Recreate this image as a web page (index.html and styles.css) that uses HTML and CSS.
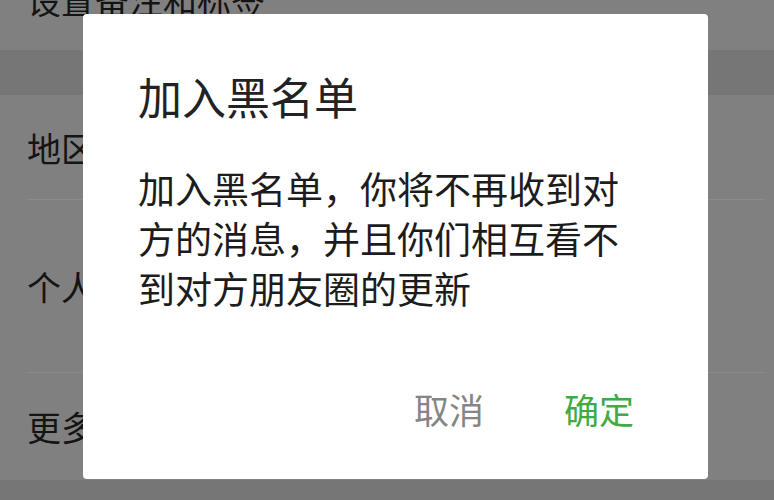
FILE: index.html
```html
<!DOCTYPE html>
<html lang="zh-CN">
<head>
<meta charset="utf-8">
<title>加入黑名单</title>
<link rel="stylesheet" href="styles.css">
</head>
<body>
<div class="page">
  <div class="list">
    <div class="row row-top"><span class="label">设置备注和标签</span></div>
    <div class="gap"></div>
    <div class="row row-region sep"><span class="label">地区</span></div>
    <div class="row row-album sep"><span class="label">个人相册</span></div>
    <div class="row row-more"><span class="label">更多信息</span></div>
    <div class="gap gap-bottom"></div>
  </div>
  <div class="dialog">
    <div class="dialog-title">加入黑名单</div>
    <div class="dialog-body">加入黑名单，你将不再收到对方的消息，并且你们相互看不到对方朋友圈的更新</div>
    <div class="dialog-actions">
      <span class="btn btn-cancel">取消</span>
      <span class="btn btn-ok">确定</span>
    </div>
  </div>
</div>
</body>
</html>
```

FILE: styles.css
```css
html, body {
  margin: 0;
  padding: 0;
}
body {
  width: 774px;
  height: 500px;
  overflow: hidden;
  background: #808080;
  font-family: "Noto Sans CJK SC", "Noto Sans", sans-serif;
}
.page {
  position: relative;
  width: 774px;
  height: 500px;
  overflow: hidden;
}
.list {
  margin-top: -50px;
  display: flex;
  flex-direction: column;
}
.row {
  display: flex;
  align-items: center;
  padding-left: 27px;
  background: #808080;
  position: relative;
}
.label {
  font-size: 34px;
  line-height: 34px;
  color: #141414;
  white-space: nowrap;
}
.row-top { height: 100px; }
.row-region { height: 105px; }
.row-album { height: 173px; }
.row-more { height: 107px; }
.sep::after {
  content: "";
  position: absolute;
  left: 27px;
  right: 9px;
  bottom: 0;
  height: 1px;
  background: #8b8b8b;
}
.gap {
  height: 45px;
  background: #767676;
}
.gap-bottom {
  height: 40px;
}
.dialog {
  position: absolute;
  left: 83px;
  top: 14px;
  width: 625px;
  height: 465px;
  box-sizing: border-box;
  background: #ffffff;
  border-radius: 4px;
  padding: 60px 55px 52px 55px;
  display: flex;
  flex-direction: column;
}
.dialog-title {
  font-size: 44px;
  line-height: 44px;
  color: #222222;
}
.dialog-body {
  margin-top: 45px;
  font-size: 37px;
  line-height: 50px;
  color: #1c1c1c;
}
.dialog-actions {
  margin-top: auto;
  display: flex;
  justify-content: flex-end;
  gap: 80px;
  padding-right: 19px;
}
.btn {
  font-size: 35px;
  line-height: 36px;
}
.btn-cancel { color: #858585; }
.btn-ok { color: #43aa43; }
```
